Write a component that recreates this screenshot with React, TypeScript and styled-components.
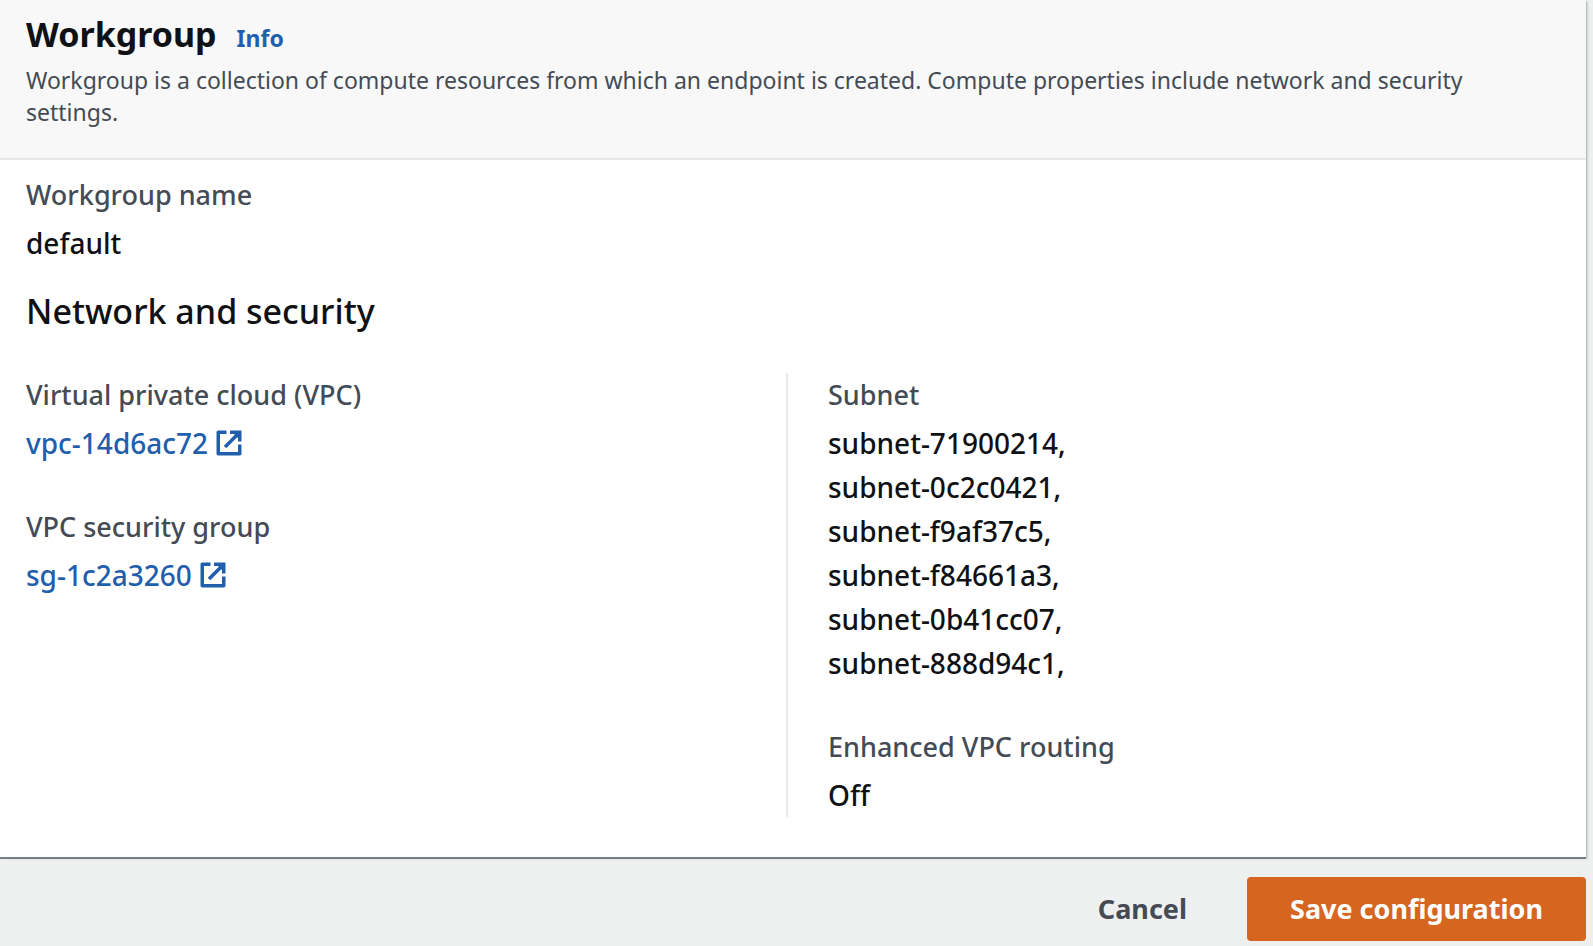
import React from "react";
import styled, { createGlobalStyle } from "styled-components";

const GlobalStyle = createGlobalStyle`
  * { box-sizing: border-box; }
  body {
    margin: 0;
    background: #eef0f0;
    color: #0f1114;
    font-family: "Noto Sans", "Open Sans", sans-serif;
    font-size: 27px;
    font-weight: 500;
    line-height: 44px;
  }
`;

const Page = styled.main`
  padding-right: 7px;
`;

const Card = styled.section`
  background: #ffffff;
  box-shadow: 0 2px 0 0 #748083, 1px 1px 0 0 #b4bdc0, 2px 2px 2px 0 #ccd2d3;
`;

const CardHeader = styled.header`
  padding: 12px 40px 30px 26px;
  background: #f8f8f8;
  border-bottom: 2px solid #e7e9e9;
`;

const TitleRow = styled.div`
  display: flex;
  align-items: baseline;
  gap: 20px;
`;

const Title = styled.h1`
  margin: 0;
  font-size: 34px;
  font-weight: 700;
`;

const InfoLink = styled.a`
  color: #1f5fae;
  font-size: 23px;
  font-weight: 700;
  line-height: 32px;
  text-decoration: none;
`;

const Description = styled.p`
  margin: 8px 0 0;
  color: #444b54;
  font-size: 23px;
  font-weight: 400;
  line-height: 32px;
`;

const CardBody = styled.div`
  padding: 13px 40px 40px 26px;
`;

const SectionTitle = styled.h2`
  margin: 24px 0 40px;
  font-size: 34px;
  font-weight: 500;
`;

const Columns = styled.div`
  display: grid;
  grid-template-columns: 1fr 1fr;
`;

const Column = styled.dl<{ $divided?: boolean }>`
  display: flex;
  flex-direction: column;
  gap: 40px;
  margin: 0;
  padding-left: ${(p) => (p.$divided ? "40px" : "0")};
  border-left: ${(p) => (p.$divided ? "2px solid #e7e9e9" : "0")};
`;

const FieldBox = styled.div`
  display: flex;
  flex-direction: column;
  gap: 4px;
`;

const Label = styled.dt`
  color: #444b54;
`;

const Value = styled.dd`
  display: flex;
  flex-direction: column;
  align-items: flex-start;
  margin: 0;
  font-size: 28px;
`;

const ResourceLink = styled.a`
  display: flex;
  align-items: center;
  gap: 8px;
  color: #1f5fae;
  text-decoration: none;
`;

const Footer = styled.footer`
  display: flex;
  justify-content: flex-end;
  gap: 17px;
  padding: 20px 0 4px;
`;

const Button = styled.button<{ $primary?: boolean }>`
  height: 64px;
  padding: 0 43px;
  border: 0;
  border-radius: 4px;
  background: ${(p) => (p.$primary ? "#d5651f" : "transparent")};
  color: ${(p) => (p.$primary ? "#ffffff" : "#444b54")};
  font: inherit;
  font-weight: 700;
  cursor: pointer;
`;

const ExternalIcon = () => (
  <svg width="26" height="26" viewBox="0 0 26 26" fill="none" stroke="currentColor" strokeWidth="3.5" aria-hidden="true">
    <path d="M10.5 2.25H2.25v21.5h21.5V14.5" strokeLinejoin="round" />
    <path d="M14 2.25h9.75V11.5M23.5 2.5 9 17" />
    <path d="M17 3h6v6z" fill="currentColor" stroke="none" />
  </svg>
);

const Field = ({ label, children }: { label: string; children: React.ReactNode }) => (
  <FieldBox>
    <Label>{label}</Label>
    {children}
  </FieldBox>
);

const subnets = [
  "subnet-71900214",
  "subnet-0c2c0421",
  "subnet-f9af37c5",
  "subnet-f84661a3",
  "subnet-0b41cc07",
  "subnet-888d94c1",
];

export default function App() {
  return (
    <>
      <GlobalStyle />
      <Page>
        <Card>
          <CardHeader>
            <TitleRow>
              <Title>Workgroup</Title>
              <InfoLink href="#info">Info</InfoLink>
            </TitleRow>
            <Description>
              Workgroup is a collection of compute resources from which an endpoint is created. Compute properties
              include network and security settings.
            </Description>
          </CardHeader>
          <CardBody>
            <Column>
              <Field label="Workgroup name">
                <Value>default</Value>
              </Field>
            </Column>
            <SectionTitle>Network and security</SectionTitle>
            <Columns>
              <Column>
                <Field label="Virtual private cloud (VPC)">
                  <Value>
                    <ResourceLink href="#vpc">
                      vpc-14d6ac72
                      <ExternalIcon />
                    </ResourceLink>
                  </Value>
                </Field>
                <Field label="VPC security group">
                  <Value>
                    <ResourceLink href="#security-group">
                      sg-1c2a3260
                      <ExternalIcon />
                    </ResourceLink>
                  </Value>
                </Field>
              </Column>
              <Column $divided>
                <Field label="Subnet">
                  <Value>
                    {subnets.map((id) => (
                      <span key={id}>{id},</span>
                    ))}
                  </Value>
                </Field>
                <Field label="Enhanced VPC routing">
                  <Value>Off</Value>
                </Field>
              </Column>
            </Columns>
          </CardBody>
        </Card>
        <Footer>
          <Button type="button">Cancel</Button>
          <Button type="button" $primary>
            Save configuration
          </Button>
        </Footer>
      </Page>
    </>
  );
}
